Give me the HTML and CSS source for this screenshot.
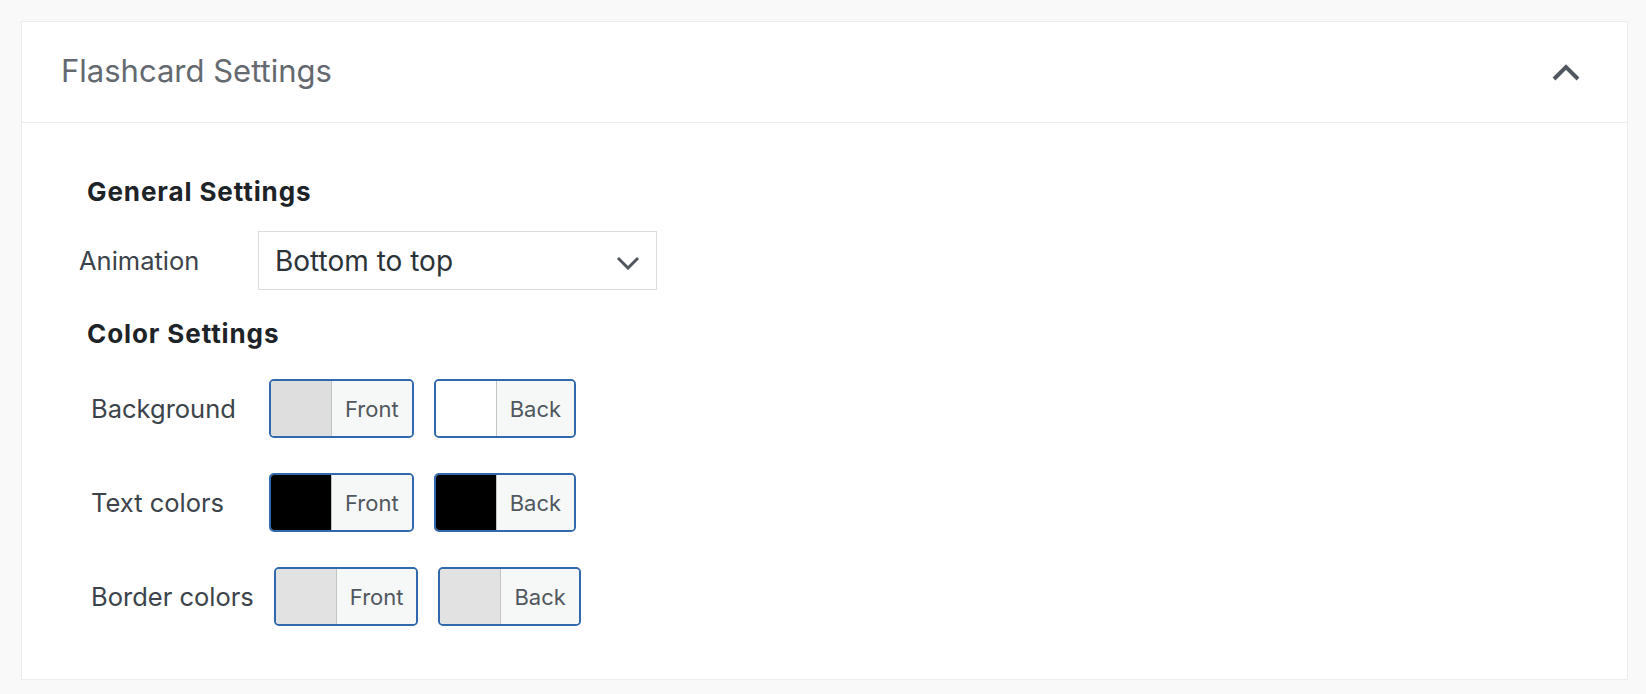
FILE: index.html
```html
<!DOCTYPE html>
<html lang="en">
<head>
<meta charset="utf-8">
<title>Flashcard Settings</title>
<link rel="stylesheet" href="styles.css">
</head>
<body>
<div class="postbox">
  <div class="postbox-header">
    <h2 class="postbox-title">Flashcard Settings</h2>
    <svg class="toggle" width="28" height="18" viewBox="0 0 28 18" aria-hidden="true">
      <polyline points="2,16 14,4 26,16" fill="none" stroke="#50575e" stroke-width="4"/>
    </svg>
  </div>
  <div class="inside">
    <h3 class="section-title">General Settings</h3>
    <div class="field-row">
      <div class="field-label">Animation</div>
      <div class="select">
        <span>Bottom to top</span>
        <svg class="select-arrow" width="24" height="14" viewBox="0 0 24 14" aria-hidden="true">
          <polyline points="2,2 12,12 22,2" fill="none" stroke="#50575e" stroke-width="3"/>
        </svg>
      </div>
    </div>
    <h3 class="section-title color-title">Color Settings</h3>
    <div class="color-row">
      <div class="field-label">Background</div>
      <div class="color-btn"><span class="swatch sw-lightgray"></span><span class="btn-label">Front</span></div>
      <div class="color-btn"><span class="swatch sw-white"></span><span class="btn-label">Back</span></div>
    </div>
    <div class="color-row">
      <div class="field-label">Text colors</div>
      <div class="color-btn"><span class="swatch sw-black"></span><span class="btn-label">Front</span></div>
      <div class="color-btn"><span class="swatch sw-black"></span><span class="btn-label">Back</span></div>
    </div>
    <div class="color-row">
      <div class="field-label">Border colors</div>
      <div class="color-btn"><span class="swatch sw-border"></span><span class="btn-label">Front</span></div>
      <div class="color-btn"><span class="swatch sw-border"></span><span class="btn-label">Back</span></div>
    </div>
  </div>
</div>
</body>
</html>
```
FILE: styles.css
```css
html, body {
  margin: 0;
  padding: 0;
}
body {
  background: #f9f9f9;
  font-family: Inter, "Noto Sans", "Liberation Sans", sans-serif;
}
.postbox {
  margin: 21px 18px 0 21px;
  background: #ffffff;
  border: 1px solid #ececec;
}
.postbox-header {
  height: 100px;
  display: flex;
  align-items: center;
  justify-content: space-between;
  padding: 0 47px 0 39px;
  border-bottom: 1px solid #ececec;
}
.postbox-title {
  margin: 0 0 4px 0;
  font-size: 31px;
  line-height: 31px;
  font-weight: 400;
  color: #646970;
}
.toggle {
  display: block;
}
.inside {
  padding: 57px 40px 53px 0;
}
.section-title {
  margin: 0 0 27px 65px;
  font-size: 26px;
  line-height: 24px;
  font-weight: 700;
  color: #1d2327;
  letter-spacing: 0.9px;
}
.color-title {
  margin-top: 32px;
  margin-bottom: 33px;
}
.field-row {
  display: flex;
  align-items: center;
  margin-left: 57px;
}
.field-label {
  width: 179px;
  font-size: 25.5px;
  line-height: 30px;
  color: #3c434a;
}
.select {
  width: 399px;
  height: 59px;
  box-sizing: border-box;
  border: 1px solid #dcdcde;
  display: flex;
  align-items: center;
  justify-content: space-between;
  padding: 0 16px 0 16px;
  font-size: 28px;
  color: #2c3338;
}
.select-arrow {
  display: block;
  margin-top: 4px;
}
.color-row {
  display: flex;
  align-items: center;
  gap: 20px;
  margin-left: 69px;
  margin-bottom: 35px;
}
.color-row:last-child {
  margin-bottom: 0;
}
.color-row .field-label {
  width: auto;
  min-width: 158px;
}
.color-btn {
  display: flex;
  height: 59px;
  box-sizing: border-box;
  border: 2px solid #3069ac;
  border-radius: 5px;
  overflow: hidden;
}
.swatch {
  width: 60px;
  border-right: 1px solid #c3c4c7;
}
.sw-lightgray { background: #dedede; }
.sw-white { background: #ffffff; }
.sw-black { background: #000000; }
.sw-border { background: #e1e2e1; }
.btn-label {
  display: flex;
  align-items: center;
  padding: 0 13px;
  background: #f6f7f7;
  font-size: 22px;
  color: #50575e;
}
```
